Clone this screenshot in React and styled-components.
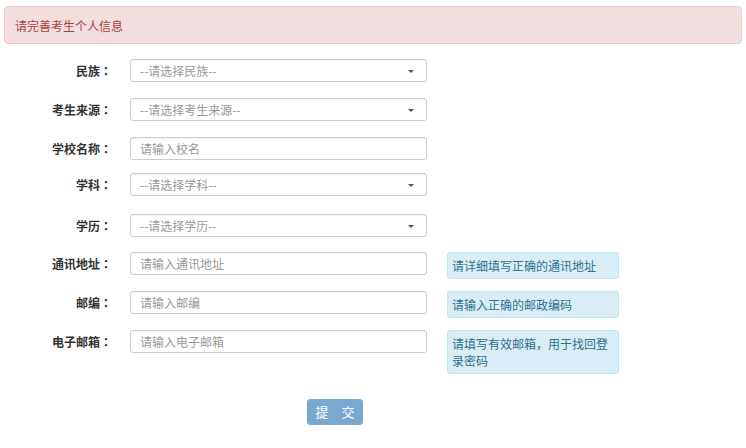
import React from "react";
import styled, { createGlobalStyle } from "styled-components";

const Global = createGlobalStyle`
  html, body { margin: 0; padding: 0; background: #fff; }
  body {
    font-family: "Noto Sans CJK SC", "Microsoft YaHei", "Liberation Sans", sans-serif;
    font-size: 12px;
    color: #333;
  }
  * { box-sizing: border-box; }
`;

const Page = styled.div`
  padding: 6px 4px 0 4px;
  width: 746px;
`;

const Alert = styled.div`
  height: 38px;
  display: flex;
  align-items: center;
  padding: 0 10px;
  background: #f2dede;
  border: 1px solid #ebccd1;
  border-radius: 4px;
  color: #a94442;
  font-size: 12px;
`;

const Form = styled.form`
  margin-top: 15px;
  display: flex;
  flex-direction: column;
`;

const Row = styled.div`
  display: grid;
  grid-template-columns: 108px 297px 172px;
  column-gap: 18px;
  align-items: start;
  height: ${(p) => p.$h}px;
  & > :nth-child(3) { margin-left: 2px; }
`;

const Label = styled.label`
  height: 23px;
  line-height: 23px;
  text-align: right;
  font-weight: bold;
  font-size: 12px;
  color: #333;
  white-space: nowrap;
`;

const Colon = styled.span`
  font-family: "Noto Sans CJK JP", "Noto Sans CJK SC", sans-serif;
`;

const Field = styled.div`
  position: relative;
  height: 23px;
  border: 1px solid #ccc;
  border-radius: 3px;
  background: #fff;
  box-shadow: inset 0 1px 1px rgba(0, 0, 0, 0.04);
  display: flex;
  align-items: center;
  padding: 0 9px;
  color: #999;
  font-size: 12px;
`;

const Caret = styled.span`
  position: absolute;
  right: 12px;
  top: 50%;
  margin-top: -1px;
  width: 0;
  height: 0;
  border-left: 3px solid transparent;
  border-right: 3px solid transparent;
  border-top: 3px solid #555;
`;

const Help = styled.div`
  width: 172px;
  padding: 4px 4px;
  line-height: 17px;
  background: #d9edf7;
  border: 1px solid #bce8f1;
  border-radius: 3px;
  color: #31708f;
  font-size: 12px;
`;

const ButtonRow = styled.div`
  margin-top: 27px;
  padding-left: 303px;
`;

const Submit = styled.button`
  width: 56px;
  height: 26px;
  padding: 0;
  border: 1px solid #7da6cb;
  border-radius: 3px;
  background: #7aa8d1;
  color: #fff;
  font-family: inherit;
  font-size: 13px;
  line-height: 24px;
  cursor: not-allowed;
`;

const rows = [
  { label: "民族", text: "--请选择民族--", select: true, h: 39 },
  { label: "考生来源", text: "--请选择考生来源--", select: true, h: 39 },
  { label: "学校名称", text: "请输入校名", h: 36 },
  { label: "学科", text: "--请选择学科--", select: true, h: 41 },
  { label: "学历", text: "--请选择学历--", select: true, h: 38 },
  { label: "通讯地址", text: "请输入通讯地址", help: "请详细填写正确的通讯地址", h: 39 },
  { label: "邮编", text: "请输入邮编", help: "请输入正确的邮政编码", h: 39 },
  { label: "电子邮箱", text: "请输入电子邮箱", help: "请填写有效邮箱，用于找回登录密码", h: 42 },
];

export default function App() {
  return (
    <Page>
      <Global />
      <Alert>请完善考生个人信息</Alert>
      <Form onSubmit={(e) => e.preventDefault()}>
        {rows.map((r) => (
          <Row key={r.label} $h={r.h}>
            <Label>
              {r.label}
              <Colon>：</Colon>
            </Label>
            <Field>
              {r.text}
              {r.select && <Caret />}
            </Field>
            {r.help ? <Help>{r.help}</Help> : <span />}
          </Row>
        ))}
      </Form>
      <ButtonRow>
        <Submit type="button">提　交</Submit>
      </ButtonRow>
    </Page>
  );
}
